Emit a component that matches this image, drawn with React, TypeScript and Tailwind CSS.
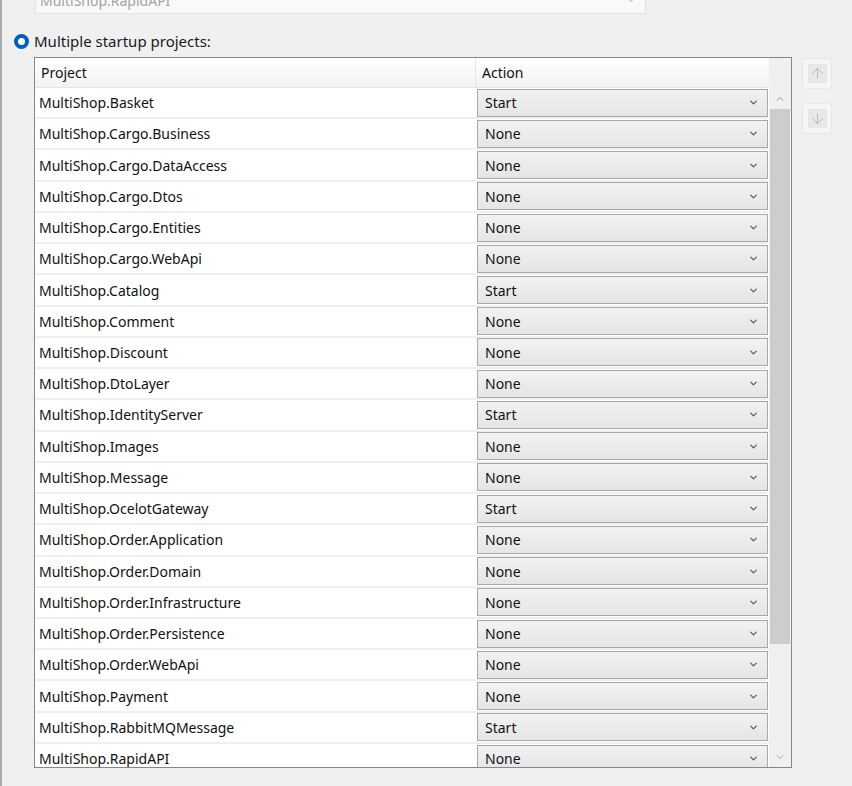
import { ChevronDown, ChevronUp, ArrowUp, ArrowDown } from "lucide-react";

const projects: [string, string][] = [
  ["MultiShop.Basket", "Start"],
  ["MultiShop.Cargo.Business", "None"],
  ["MultiShop.Cargo.DataAccess", "None"],
  ["MultiShop.Cargo.Dtos", "None"],
  ["MultiShop.Cargo.Entities", "None"],
  ["MultiShop.Cargo.WebApi", "None"],
  ["MultiShop.Catalog", "Start"],
  ["MultiShop.Comment", "None"],
  ["MultiShop.Discount", "None"],
  ["MultiShop.DtoLayer", "None"],
  ["MultiShop.IdentityServer", "Start"],
  ["MultiShop.Images", "None"],
  ["MultiShop.Message", "None"],
  ["MultiShop.OcelotGateway", "Start"],
  ["MultiShop.Order.Application", "None"],
  ["MultiShop.Order.Domain", "None"],
  ["MultiShop.Order.Infrastructure", "None"],
  ["MultiShop.Order.Persistence", "None"],
  ["MultiShop.Order.WebApi", "None"],
  ["MultiShop.Payment", "None"],
  ["MultiShop.RabbitMQMessage", "Start"],
  ["MultiShop.RapidAPI", "None"],
];

export default function App() {
  return (
    <div
      className="w-[852px] h-[786px] overflow-hidden bg-[#f0f0f0] border-l-2 border-[#a9a9a9] text-[14px] text-[#111]"
      style={{ fontFamily: '"Noto Sans", "Open Sans", sans-serif' }}
    >
      {/* single startup project dropdown, scrolled off the top */}
      <div className="ml-[33px] -mt-[14px] flex h-[28px] w-[611px] items-center justify-between border border-[#e3e3e3] bg-[#f9f9f9] pl-[4px] pr-[8px] text-[#a3a3a3]">
        <span>MultiShop.RapidAPI</span>
        <ChevronDown size={12} className="text-[#b0b0b0]" />
      </div>

      <div className="mt-[19px] ml-[12px] flex h-[16px] items-center gap-[5px]">
        <div className="flex h-[15px] w-[15px] items-center justify-center rounded-full bg-[#005fb8]">
          <div className="h-[7px] w-[7px] rounded-full bg-white" />
        </div>
        <span className="text-[15px] leading-none text-[#1a1a1a]">Multiple startup projects:</span>
      </div>

      <div className="mt-[8px] flex items-start">
        <div className="ml-[32px] flex h-[711px] w-[758px] border border-[#828790] bg-white">
          <div className="flex w-[734px] flex-col overflow-hidden">
            <div className="flex h-[30px] shrink-0 border-b border-[#e5e5e5] bg-gradient-to-b from-white to-[#f3f3f3]">
              <div className="flex w-[441px] items-center border-r border-[#e5e5e5] pl-[6px]">Project</div>
              <div className="flex flex-1 items-center pl-[6px]">Action</div>
            </div>
            <div className="flex flex-col">
              {projects.map(([name, action]) => (
                <div key={name} className="flex h-[31.24px] shrink-0 border-b-2 border-[#efefef]">
                  <div className="flex w-[441px] items-center pl-[4px]">{name}</div>
                  <div className="flex flex-1 items-center pl-[1px] pr-[1px]">
                    <div className="flex h-[28px] w-full items-center justify-between border border-[#a8a8a8] bg-gradient-to-b from-[#f2f2f2] to-[#e5e5e5] pl-[7px] pr-[8px]">
                      <span>{action}</span>
                      <ChevronDown size={11} strokeWidth={2.5} className="text-[#555]" />
                    </div>
                  </div>
                </div>
              ))}
            </div>
          </div>
          <div className="flex w-[22px] flex-col items-center bg-[#f0f0f0]">
            <div className="h-[30px] w-full" />
            <div className="flex h-[21px] items-center justify-center">
              <ChevronUp size={12} className="text-[#9a9a9a]" />
            </div>
            <div className="h-[535px] w-[20px] bg-[#cdcdcd]" />
            <div className="flex-1" />
            <div className="flex h-[20px] items-center justify-center">
              <ChevronDown size={12} className="text-[#a8a8a8]" />
            </div>
          </div>
        </div>

        <div className="ml-[10px] mt-[1px] flex flex-col gap-[14px]">
          <div className="flex h-[31px] w-[30px] items-center justify-center rounded-[4px] border border-[#e6e6e6] bg-[#f6f6f6]">
            <div className="flex h-[19px] w-[19px] items-center justify-center bg-[#e8e8e8]">
              <ArrowUp size={17} strokeWidth={1.2} className="text-[#b3b3b3]" />
            </div>
          </div>
          <div className="flex h-[31px] w-[30px] items-center justify-center rounded-[4px] border border-[#e6e6e6] bg-[#f6f6f6]">
            <div className="flex h-[19px] w-[19px] items-center justify-center bg-[#e8e8e8]">
              <ArrowDown size={17} strokeWidth={1.2} className="text-[#b3b3b3]" />
            </div>
          </div>
        </div>
      </div>
    </div>
  );
}
